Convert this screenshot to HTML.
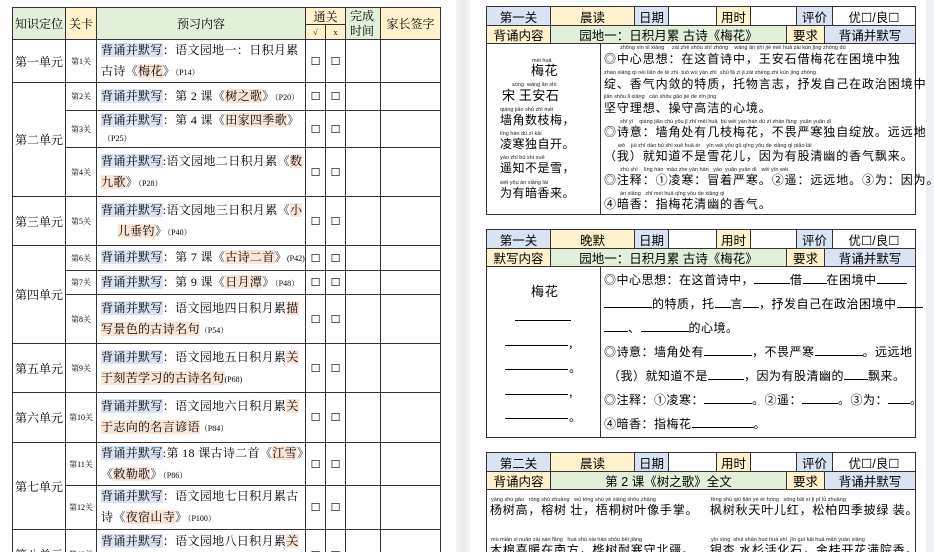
<!DOCTYPE html>
<html><head><meta charset="utf-8">
<style>
*{margin:0;padding:0;box-sizing:border-box}
html{width:934px;height:552px;overflow:hidden}
body{width:934px;height:552px;overflow:hidden;background:#fff;font-family:"Liberation Serif","Noto Serif CJK SC","Noto Sans CJK SC",serif;color:#000;position:relative}
.gap{position:absolute;left:456px;top:0;width:14px;height:552px;background:linear-gradient(90deg,#f4f5f7,#e9ebef,#f4f5f7)}
.gap2{position:absolute;left:926px;top:0;width:8px;height:552px;background:#eef0f3}
.c{position:absolute;border:1.3px solid #333;display:flex;align-items:center;justify-content:center;font-size:12px;overflow:hidden;text-align:center}
.t{justify-content:flex-start;text-align:left;padding-left:4px;font-size:12px;line-height:21px;letter-spacing:0.35px}
.t div{white-space:nowrap}
.hb{background:#dae3f3}.ho{background:#fbe4d5}
.g{background:#e2efd9}.y{background:#fff2cc}.b{background:#dae3f3}
.p{font-size:8px;letter-spacing:0}
.sm{font-size:8px}
.bx{font-size:11px}
.R{font-family:"Liberation Sans","Noto Sans CJK SC",sans-serif;font-size:12.5px}
.abs{position:absolute;white-space:nowrap}
.py{font-size:5.5px;font-family:"Liberation Sans",sans-serif;color:#222;position:absolute;white-space:nowrap}
.hz{font-size:12px;position:absolute;white-space:nowrap;letter-spacing:0.9px;font-family:"Noto Sans CJK SC",sans-serif;line-height:14px}
.pm{letter-spacing:0.5px}
.u{display:inline-block;border-bottom:1px solid #000;height:12px}
</style></head><body>
<div class="gap"></div><div class="gap2"></div>

<div class="c g" style="left:12px;top:7px;width:54px;height:33px">知识定位</div>
<div class="c y" style="left:65px;top:7px;width:32px;height:33px">关卡</div>
<div class="c g" style="left:96px;top:7px;width:210px;height:33px">预习内容</div>
<div class="c y" style="left:305px;top:7px;width:41px;height:18px">通关</div>
<div class="c y sm" style="left:305px;top:24px;width:21px;height:16px">√</div>
<div class="c y sm" style="left:325px;top:24px;width:21px;height:16px">x</div>
<div class="c g" style="left:345px;top:7px;width:36px;height:33px;line-height:15px;justify-content:flex-start;padding-left:4px">完成<br>时间</div>
<div class="c y" style="left:380px;top:7px;width:61px;height:33px">家长签字</div>

<div class="c" style="left:12px;top:39px;width:54px;height:44px">第一单元</div>
<div class="c" style="left:12px;top:82px;width:54px;height:115px">第二单元</div>
<div class="c" style="left:12px;top:196px;width:54px;height:50px">第三单元</div>
<div class="c" style="left:12px;top:245px;width:54px;height:99px">第四单元</div>
<div class="c" style="left:12px;top:343px;width:54px;height:50px">第五单元</div>
<div class="c" style="left:12px;top:392px;width:54px;height:51px">第六单元</div>
<div class="c" style="left:12px;top:442px;width:54px;height:88px">第七单元</div>
<div class="c" style="left:12px;top:529px;width:54px;height:50px">第八单元</div>

<div class="c sm" style="left:65px;top:39px;width:32px;height:44px">第1关</div>
<div class="c t" style="left:96px;top:39px;width:210px;height:44px"><div><span class="hb">背诵并默写</span>：语文园地一：日积月累<br>古诗《<span class="ho">梅花</span>》<span class="p">（P14）</span></div></div>

<div class="c sm" style="left:65px;top:82px;width:32px;height:29px">第2关</div>
<div class="c t" style="left:96px;top:82px;width:210px;height:29px"><div><span class="hb">背诵并默写</span>：第 2 课《<span class="ho">树之歌</span>》<span class="p">（P20）</span></div></div>

<div class="c sm" style="left:65px;top:110px;width:32px;height:38px">第3关</div>
<div class="c t" style="left:96px;top:110px;width:210px;height:38px;line-height:17px"><div><span class="hb">背诵并默写</span>：第 4 课《<span class="ho">田家四季歌</span>》<br><span class="p">&nbsp;（P25）</span></div></div>

<div class="c sm" style="left:65px;top:147px;width:32px;height:50px">第4关</div>
<div class="c t" style="left:96px;top:147px;width:210px;height:50px"><div><span class="hb">背诵并默写</span>:语文园地二日积月累《<span class="ho">数</span><br><span class="ho">九歌</span>》<span class="p">（P28）</span></div></div>

<div class="c sm" style="left:65px;top:196px;width:32px;height:50px">第5关</div>
<div class="c t" style="left:96px;top:196px;width:210px;height:50px"><div><span class="hb">背诵并默写</span>:语文园地三日积月累《<span class="ho">小</span><br>&nbsp;&nbsp;&nbsp;&nbsp;&nbsp;<span class="ho">儿垂钓</span>》<span class="p">（P40）</span></div></div>

<div class="c sm" style="left:65px;top:245px;width:32px;height:26px">第6关</div>
<div class="c t" style="left:96px;top:245px;width:210px;height:26px"><div><span class="hb">背诵并默写</span>：第 7 课《<span class="ho">古诗二首</span>》<span class="p">(P42)</span></div></div>

<div class="c sm" style="left:65px;top:270px;width:32px;height:25px">第7关</div>
<div class="c t" style="left:96px;top:270px;width:210px;height:25px"><div><span class="hb">背诵并默写</span>：第 9 课《<span class="ho">日月潭</span>》<span class="p">（P48）</span></div></div>

<div class="c sm" style="left:65px;top:294px;width:32px;height:50px">第8关</div>
<div class="c t" style="left:96px;top:294px;width:210px;height:50px"><div><span class="hb">背诵并默写</span>：语文园地四日积月累<span class="ho">描</span><br><span class="ho">写景色的古诗名句</span><span class="p">（P54）</span></div></div>

<div class="c sm" style="left:65px;top:343px;width:32px;height:50px">第9关</div>
<div class="c t" style="left:96px;top:343px;width:210px;height:50px"><div><span class="hb">背诵并默写</span>：语文园地五日积月累<span class="ho">关</span><br><span class="ho">于刻苦学习的古诗名句</span><span class="p">(P68)</span></div></div>

<div class="c sm" style="left:65px;top:392px;width:32px;height:51px">第10关</div>
<div class="c t" style="left:96px;top:392px;width:210px;height:51px"><div><span class="hb">背诵并默写</span>：语文园地六日积月累<span class="ho">关</span><br><span class="ho">于志向的名言谚语</span><span class="p">（P84）</span></div></div>

<div class="c sm" style="left:65px;top:442px;width:32px;height:44px">第11关</div>
<div class="c t" style="left:96px;top:442px;width:210px;height:44px"><div><span class="hb">背诵并默写</span>:第 18 课古诗二首《<span class="ho">江雪</span>》<br>《<span class="ho">敕勒歌</span>》<span class="p">（P86）</span></div></div>

<div class="c sm" style="left:65px;top:485px;width:32px;height:45px">第12关</div>
<div class="c t" style="left:96px;top:485px;width:210px;height:45px"><div><span class="hb">背诵并默写</span>：语文园地七日积月累古<br>诗《<span class="ho">夜宿山寺</span>》<span class="p">（P100）</span></div></div>

<div class="c sm" style="left:65px;top:529px;width:32px;height:50px">第13关</div>
<div class="c t" style="left:96px;top:529px;width:210px;height:50px;align-items:flex-start;padding-top:1px"><div><span class="hb">背诵并默写</span>：语文园地八日积月累<span class="ho">关</span></div></div>

<div id="cols"></div>
<script>
var ys=[39,82,110,147,196,245,270,294,343,392,442,485,529,580];
var h='';
for(var i=0;i<ys.length-1;i++){var t=ys[i],hh=ys[i+1]-t+1;
h+='<div class="c bx" style="left:305px;top:'+t+'px;width:21px;height:'+hh+'px">☐</div>';
h+='<div class="c bx" style="left:325px;top:'+t+'px;width:21px;height:'+hh+'px">☐</div>';
h+='<div class="c" style="left:345px;top:'+t+'px;width:36px;height:'+hh+'px"></div>';
h+='<div class="c" style="left:380px;top:'+t+'px;width:61px;height:'+hh+'px"></div>';}
document.getElementById('cols').outerHTML=h;
function hdr(top,a,b,c,d){
var r='';var x1=[486,550,634,668,716,750,796,832,915];var cl=['b','y','b','','y','','b',''];
var tx=[a,b,'日期','','用时','','评价','优☐/良☐'];
for(var i=0;i<8;i++)r+='<div class="c R '+cl[i]+'" style="left:'+x1[i]+'px;top:'+top+'px;width:'+(x1[i+1]-x1[i]+1)+'px;height:20px">'+tx[i]+'</div>';
var x2=[486,550,786,824,915];var c2=['y','g','y','b'];var t2=[c,d,'要求','背诵并默写'];
for(var i=0;i<4;i++)r+='<div class="c R '+c2[i]+'" style="left:'+x2[i]+'px;top:'+(top+19)+'px;width:'+(x2[i+1]-x2[i]+1)+'px;height:19px">'+t2[i]+'</div>';
return r;}
var s='';
s+=hdr(6,'第一关','晨读','背诵内容','园地一：日积月累 古诗《梅花》');
s+='<div class="c" style="left:486px;top:43px;width:115px;height:172px"></div><div class="c" style="left:600px;top:43px;width:316px;height:172px"></div>';
s+=hdr(229,'第一关','晚默','默写内容','园地一：日积月累 古诗《梅花》');
s+='<div class="c" style="left:486px;top:266px;width:115px;height:172px"></div><div class="c" style="left:600px;top:266px;width:316px;height:172px"></div>';
s+=hdr(452,'第二关','晨读','背诵内容','第 2 课《树之歌》全文');
s+='<div class="c" style="left:486px;top:489px;width:430px;height:80px"></div>';
document.write(s);
</script>

<div class="py" style="left:532px;top:58px">méi huā</div>
<div class="hz pm" style="left:531px;top:63px;font-size:13px">梅花</div>
<div class="py" style="left:512px;top:82px">sòng &nbsp;wáng ān shí</div>
<div class="hz pm" style="left:502px;top:88px;font-size:13px">宋 王安石</div>
<div class="py" style="left:500px;top:107px">qiáng jiǎo shù zhī méi</div>
<div class="hz pm" style="left:500px;top:113px">墙角数枝梅，</div>
<div class="py" style="left:500px;top:131px">líng hán dú zì kāi</div>
<div class="hz pm" style="left:500px;top:137px">凌寒独自开。</div>
<div class="py" style="left:500px;top:155px">yáo zhī bú shì xuě</div>
<div class="hz pm" style="left:500px;top:161px">遥知不是雪，</div>
<div class="py" style="left:500px;top:180px">wèi yǒu àn xiāng lái</div>
<div class="hz pm" style="left:500px;top:186px">为有暗香来。</div>

<div class="py" style="left:620px;top:45px">zhōng xīn sī xiǎng &nbsp;&nbsp;&nbsp;&nbsp;zài zhè shǒu shī zhōng &nbsp;&nbsp;&nbsp;wáng ān shí jiè méi huā zài kùn jìng zhōng dú</div>
<div class="hz" style="left:604px;top:52px">◎中心思想：在这首诗中，王安石借梅花在困境中独</div>
<div class="py" style="left:604px;top:70px">zhàn xiāng qì nèi liǎn de tè zhì &nbsp;tuō wù yán zhì &nbsp;shū fā zì jǐ zài zhèng zhì kùn jìng zhōng</div>
<div class="hz" style="left:604px;top:77px">绽、香气内敛的特质，托物言志，抒发自己在政治困境中</div>
<div class="py" style="left:604px;top:94px">jiān shǒu lǐ xiǎng &nbsp;&nbsp;cāo shǒu gāo jié de xīn jìng</div>
<div class="hz" style="left:604px;top:101px">坚守理想、操守高洁的心境。</div>
<div class="py" style="left:620px;top:119px">shī yì &nbsp;&nbsp;&nbsp;qiáng jiǎo chù yǒu jǐ zhī méi huā &nbsp;bù wèi yán hán dú zì zhàn fàng &nbsp;yuǎn yuǎn dì</div>
<div class="hz" style="left:604px;top:125px">◎诗意：墙角处有几枝梅花，不畏严寒独自绽放。远远地</div>
<div class="py" style="left:618px;top:143px">wǒ &nbsp;&nbsp;&nbsp;jiù zhī dào bú shì xuě huā ér &nbsp;&nbsp;&nbsp;yīn wèi yǒu gǔ qīng yōu de xiāng qì piāo lái</div>
<div class="hz" style="left:604px;top:149px">（我）就知道不是雪花儿，因为有股清幽的香气飘来。</div>
<div class="py" style="left:620px;top:167px">zhù shì &nbsp;&nbsp;&nbsp;líng hán &nbsp;mào zhe yán hán &nbsp;&nbsp;yáo &nbsp;yuǎn yuǎn dì &nbsp;&nbsp;wèi yīn wèi</div>
<div class="hz" style="left:604px;top:173px">◎注释：①凌寒：冒着严寒。②遥：远远地。③为：因为。</div>
<div class="py" style="left:620px;top:191px">àn xiāng &nbsp;&nbsp;zhǐ méi huā qīng yōu de xiāng qì</div>
<div class="hz" style="left:604px;top:197px">④暗香：指梅花清幽的香气。</div>

<div class="hz" style="left:531px;top:284px;font-size:13px">梅花</div>
<div class="abs" style="left:515px;top:320px;width:56px;border-bottom:1px solid #000"></div>
<div class="abs" style="left:505px;top:345px;width:63px;border-bottom:1px solid #000"></div><div class="hz" style="left:569px;top:336px">,</div>
<div class="abs" style="left:505px;top:369px;width:63px;border-bottom:1px solid #000"></div><div class="hz" style="left:569px;top:361px">。</div>
<div class="abs" style="left:505px;top:394px;width:63px;border-bottom:1px solid #000"></div><div class="hz" style="left:569px;top:385px">,</div>
<div class="abs" style="left:505px;top:418px;width:63px;border-bottom:1px solid #000"></div><div class="hz" style="left:569px;top:410px">。</div>

<div class="hz" style="left:604px;top:272px;letter-spacing:0.5px">◎中心思想：在这首诗中，<span class="u" style="width:36px"></span>借<span class="u" style="width:24px"></span>在困境中<span class="u" style="width:30px"></span></div>
<div class="hz" style="left:604px;top:296px;letter-spacing:0.5px"><span class="u" style="width:48px"></span>的特质，托<span class="u" style="width:16px"></span>言<span class="u" style="width:16px"></span>，抒发自己在政治困境中<span class="u" style="width:26px"></span></div>
<div class="hz" style="left:604px;top:320px;letter-spacing:0.5px"><span class="u" style="width:24px"></span>、<span class="u" style="width:48px"></span>的心境。</div>
<div class="hz" style="left:604px;top:344px;letter-spacing:0.5px">◎诗意：墙角处有<span class="u" style="width:48px"></span>，不畏严寒<span class="u" style="width:48px"></span>。远远地</div>
<div class="hz" style="left:608px;top:368px;letter-spacing:0.5px">（我）就知道不是<span class="u" style="width:36px"></span>，因为有股清幽的<span class="u" style="width:24px"></span>飘来。</div>
<div class="hz" style="left:604px;top:392px;letter-spacing:0.5px">◎注释：①凌寒：<span class="u" style="width:48px"></span>。②遥：<span class="u" style="width:36px"></span>。③为：<span class="u" style="width:22px"></span>。</div>
<div class="hz" style="left:604px;top:416px;letter-spacing:0.5px">④暗香：指梅花<span class="u" style="width:62px"></span>。</div>

<div class="py" style="left:491px;top:497px">yáng shù gāo &nbsp;&nbsp;róng shù zhuàng &nbsp;&nbsp;wú tóng shù yè xiàng shǒu zhǎng</div>
<div class="hz" style="left:490px;top:503px;letter-spacing:0.8px">杨树高，榕树 壮，梧桐树叶像手掌。</div>
<div class="py" style="left:711px;top:497px">fēng shù qiū tiān yè ér hóng &nbsp;&nbsp;sōng bǎi sì jì pī lǜ zhuāng</div>
<div class="hz" style="left:710px;top:503px;letter-spacing:0.8px">枫树秋天叶儿红，松柏四季披绿 装。</div>
<div class="py" style="left:491px;top:537px">mù mián xǐ nuǎn zài nán fāng &nbsp;&nbsp;huà shù nài hán shǒu běi jiāng</div>
<div class="hz" style="left:490px;top:543px;letter-spacing:0.8px">木棉喜暖在南方，桦树耐寒守北疆。</div>
<div class="py" style="left:711px;top:537px">yín xìng &nbsp;shuǐ shān huó huà shí &nbsp;jīn guì kāi huā mǎn yuàn xiāng</div>
<div class="hz" style="left:710px;top:543px;letter-spacing:0.8px">银杏 水杉活化石，金桂开花满院香。</div>
</body></html>
